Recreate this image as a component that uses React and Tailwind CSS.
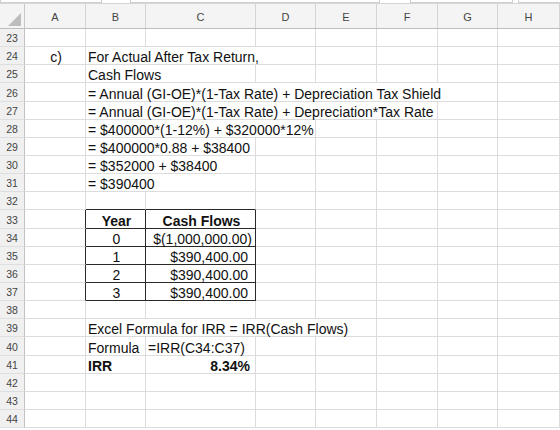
import React from 'react';

const GRID = 'grid grid-cols-[25px_61px_60px_110px_60px_61px_61px_60px_62px]';
const LETTERS = ['A', 'B', 'C', 'D', 'E', 'F', 'G', 'H'];
const SPAN = { 1: '', 2: 'col-span-2', 3: 'col-span-3', 4: 'col-span-4', 5: 'col-span-5', 6: 'col-span-6' };

// col index: 0 = A, 1 = B, 2 = C ...
const rows = [
  { n: 23 },
  { n: 24, cells: [
    { col: 0, text: 'c)', cls: 'justify-center' },
    { col: 1, span: 3, text: 'For Actual After Tax Return,' },
  ] },
  { n: 25, cells: [{ col: 1, span: 2, text: 'Cash Flows' }] },
  { n: 26, cells: [{ col: 1, span: 6, text: '= Annual (GI-OE)*(1-Tax Rate) + Depreciation Tax Shield' }] },
  { n: 27, cells: [{ col: 1, span: 5, text: '= Annual (GI-OE)*(1-Tax Rate) + Depreciation*Tax Rate' }] },
  { n: 28, cells: [{ col: 1, span: 3, text: '= $400000*(1-12%) + $320000*12%' }] },
  { n: 29, cells: [{ col: 1, span: 2, text: '= $400000*0.88 + $38400' }] },
  { n: 30, cells: [{ col: 1, span: 2, text: '= $352000 + $38400' }] },
  { n: 31, cells: [{ col: 1, span: 2, text: '= $390400' }] },
  { n: 32, cells: [
    { col: 1, cls: 'border-b-[#2a2a2a]' },
    { col: 2, cls: 'border-b-[#2a2a2a]' },
  ] },
  { n: 33, table: true, cells: [
    { col: 1, text: 'Year', cls: 'justify-center font-bold' },
    { col: 2, text: 'Cash Flows', cls: 'justify-center font-bold' },
  ] },
  { n: 34, table: true, cells: [
    { col: 1, text: '0', cls: 'justify-center' },
    { col: 2, text: '$(1,000,000.00)', cls: 'justify-end pr-[3px]' },
  ] },
  { n: 35, table: true, cells: [
    { col: 1, text: '1', cls: 'justify-center' },
    { col: 2, text: '$390,400.00', cls: 'justify-end pr-[7px]' },
  ] },
  { n: 36, table: true, cells: [
    { col: 1, text: '2', cls: 'justify-center' },
    { col: 2, text: '$390,400.00', cls: 'justify-end pr-[7px]' },
  ] },
  { n: 37, table: true, cells: [
    { col: 1, text: '3', cls: 'justify-center' },
    { col: 2, text: '$390,400.00', cls: 'justify-end pr-[7px]' },
  ] },
  { n: 38 },
  { n: 39, cells: [{ col: 1, span: 4, text: 'Excel Formula for IRR = IRR(Cash Flows)' }] },
  { n: 40, cells: [
    { col: 1, text: 'Formula' },
    { col: 2, text: '=IRR(C34:C37)' },
  ] },
  { n: 41, cells: [
    { col: 1, text: 'IRR', cls: 'font-bold' },
    { col: 2, text: '8.34%', cls: 'justify-end pr-[5px] font-bold' },
  ] },
  { n: 42 },
  { n: 43 },
  { n: 44 },
];

function Row({ n, cells = [], table }) {
  const out = [];
  let c = 0;
  while (c < 8) {
    const cell = cells.find((x) => x.col === c);
    const span = cell?.span || 1;
    let extra = '';
    if (table && c === 0) extra = 'border-r-[#2a2a2a]';
    if (table && (c === 1 || c === 2)) extra = 'border-r-[#2a2a2a] border-b-[#2a2a2a]';
    out.push(
      <div
        key={c}
        className={`${SPAN[span]} flex items-end whitespace-nowrap border-r border-b border-[#dcdcdc] pl-[2px] leading-[14px] ${extra} ${cell?.cls || ''}`}
      >
        {cell?.text}
      </div>
    );
    c += span;
  }
  return (
    <div className={`${GRID} h-[18.15px]`}>
      <div className="flex items-end justify-center border-r border-b border-r-[#c2c2c2] border-b-[#dedede] bg-[#f0f0f0] pb-[2px] font-['Liberation_Sans',sans-serif] text-[10.5px] leading-[11px] text-[#444]">
        {n}
      </div>
      {out}
    </div>
  );
}

export default function App() {
  return (
    <div className="h-[430px] w-[560px] overflow-hidden bg-white font-['Liberation_Sans',Arial,sans-serif] text-[14px] text-[#111]">
      <div className="flex h-[4px] border-b border-[#d6d6d6]">
        <div className="h-[3px] w-[102px] border-x border-b border-[#cfcfcf]" />
        <div className="ml-[28px] h-[3px] w-[250px] border-x border-b border-[#cfcfcf]" />
        <div className="ml-[30px] h-[3px] w-[103px] border-x border-b border-[#cfcfcf]" />
        <div className="ml-[5px] h-[3px] flex-1 border-l border-b border-[#cfcfcf]" />
      </div>
      <div className={`${GRID} h-[25px] bg-[#f4f4f4] border-b border-[#bdbdbd]`}>
        <div className="flex items-end justify-end border-r border-[#c8c8c8] pr-[3px] pb-[2px]">
          <svg width="13" height="13" viewBox="0 0 13 13">
            <polygon points="0,13 13,13 13,0" fill="#bdbdbd" />
          </svg>
        </div>
        {LETTERS.map((l) => (
          <div
            key={l}
            className="flex items-end justify-center border-r border-[#d4d4d4] pb-[5px] font-['Liberation_Sans',sans-serif] text-[11px] leading-[11px] text-[#444]"
          >
            {l}
          </div>
        ))}
      </div>
      {rows.map((r) => (
        <Row key={r.n} {...r} />
      ))}
    </div>
  );
}
